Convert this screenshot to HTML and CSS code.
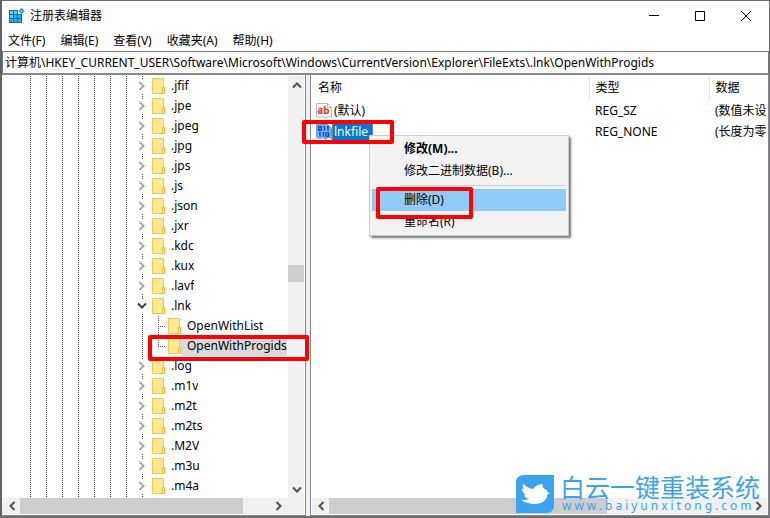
FILE: index.html
```html
<!DOCTYPE html>
<html lang="zh-CN">
<head>
<meta charset="utf-8">
<title>注册表编辑器</title>
<link rel="stylesheet" href="styles.css">
</head>
<body>
<svg class="defs" aria-hidden="true">
  <symbol id="folder" viewBox="0 0 14 16"><path d="M.5.5h11v9h1.500v6H.5z" fill="#ffe794" stroke="#eecb4d"/><path d="M10.500 15.500v-6h2v6z" fill="#ffe794" stroke="#e6c04a"/></symbol>
  <symbol id="right" viewBox="0 0 8 10"><path d="M1.500 1l4 4-4 4" fill="none" stroke="currentColor" stroke-width="2"/></symbol>
  <symbol id="down" viewBox="0 0 10 8"><path d="M1 1.500l4 4 4-4" fill="none" stroke="currentColor" stroke-width="2"/></symbol>
</svg>
<div class="window">
  <header class="titlebar">
    <svg class="app-icon" viewBox="0 0 16 16"><path d="M0 2h9v4h4v9H0z" fill="#0b6fa4"/><path d="M1 3h3v3H1zM5 3h3v3H5zM1 7h3v3H1z" fill="#5fd3fb"/><path d="M5 7h3v3H5zM9 7h3v3H9zM1 11h3v3H1zM5 11h3v3H5zM9 11h3v3H9z" fill="#27b0ec"/><path d="M12.500 0L15.500 3l-3 3-3-3z" fill="#168bc4"/><path d="M12.500 1.700L13.800 3l-1.300 1.300L11.200 3z" fill="#8be2ff"/></svg>
    <h1>注册表编辑器</h1>
    <div class="controls">
      <button aria-label="最小化"><svg viewBox="0 0 10 10"><path d="M0 4.500h10" stroke="#000"/></svg></button>
      <button aria-label="最大化"><svg viewBox="0 0 10 10"><path d="M.5.5h9v9h-9z" fill="none" stroke="#000"/></svg></button>
      <button aria-label="关闭"><svg viewBox="0 0 10 10"><path d="M0 0l10 10M10 0L0 10" stroke="#000"/></svg></button>
    </div>
  </header>
  <nav class="menubar">
    <button>文件(F)</button><button>编辑(E)</button><button>查看(V)</button><button>收藏夹(A)</button><button>帮助(H)</button>
  </nav>
  <input class="address" type="text" aria-label="路径" value="计算机\HKEY_CURRENT_USER\Software\Microsoft\Windows\CurrentVersion\Explorer\FileExts\.lnk\OpenWithProgids">
  <main class="panes">
    <section class="pane tree-pane">
      <div class="tree-area">
        <ul class="tree">
          <li><svg class="twist"><use href="#right"/></svg><svg class="folder"><use href="#folder"/></svg><span>.jfif</span></li>
          <li><svg class="twist"><use href="#right"/></svg><svg class="folder"><use href="#folder"/></svg><span>.jpe</span></li>
          <li><svg class="twist"><use href="#right"/></svg><svg class="folder"><use href="#folder"/></svg><span>.jpeg</span></li>
          <li><svg class="twist"><use href="#right"/></svg><svg class="folder"><use href="#folder"/></svg><span>.jpg</span></li>
          <li><svg class="twist"><use href="#right"/></svg><svg class="folder"><use href="#folder"/></svg><span>.jps</span></li>
          <li><svg class="twist"><use href="#right"/></svg><svg class="folder"><use href="#folder"/></svg><span>.js</span></li>
          <li><svg class="twist"><use href="#right"/></svg><svg class="folder"><use href="#folder"/></svg><span>.json</span></li>
          <li><svg class="twist"><use href="#right"/></svg><svg class="folder"><use href="#folder"/></svg><span>.jxr</span></li>
          <li><svg class="twist"><use href="#right"/></svg><svg class="folder"><use href="#folder"/></svg><span>.kdc</span></li>
          <li><svg class="twist"><use href="#right"/></svg><svg class="folder"><use href="#folder"/></svg><span>.kux</span></li>
          <li><svg class="twist"><use href="#right"/></svg><svg class="folder"><use href="#folder"/></svg><span>.lavf</span></li>
          <li><svg class="twist open"><use href="#down"/></svg><svg class="folder"><use href="#folder"/></svg><span>.lnk</span></li>
          <li class="child"><i class="branch"></i><svg class="folder"><use href="#folder"/></svg><span>OpenWithList</span></li>
          <li class="child selected"><i class="branch last"></i><svg class="folder"><use href="#folder"/></svg><span>OpenWithProgids</span><b class="mark mark-tree"></b></li>
          <li><svg class="twist"><use href="#right"/></svg><svg class="folder"><use href="#folder"/></svg><span>.log</span></li>
          <li><svg class="twist"><use href="#right"/></svg><svg class="folder"><use href="#folder"/></svg><span>.m1v</span></li>
          <li><svg class="twist"><use href="#right"/></svg><svg class="folder"><use href="#folder"/></svg><span>.m2t</span></li>
          <li><svg class="twist"><use href="#right"/></svg><svg class="folder"><use href="#folder"/></svg><span>.m2ts</span></li>
          <li><svg class="twist"><use href="#right"/></svg><svg class="folder"><use href="#folder"/></svg><span>.M2V</span></li>
          <li><svg class="twist"><use href="#right"/></svg><svg class="folder"><use href="#folder"/></svg><span>.m3u</span></li>
          <li><svg class="twist"><use href="#right"/></svg><svg class="folder"><use href="#folder"/></svg><span>.m4a</span></li>
        </ul>
        <div class="vbar">
          <button aria-label="向上滚动"><svg class="flip"><use href="#down"/></svg></button>
          <div class="vtrack"><div class="vthumb"></div></div>
          <button aria-label="向下滚动"><svg><use href="#down"/></svg></button>
        </div>
      </div>
      <div class="hbar tree-hbar">
        <button aria-label="向左滚动"><svg class="flip"><use href="#right"/></svg></button>
        <div class="htrack"><div class="hthumb"></div></div>
        <button aria-label="向右滚动"><svg><use href="#right"/></svg></button>
      </div>
    </section>
    <section class="pane list-pane">
      <div class="list-area">
        <table>
          <colgroup><col class="c-name"><col class="c-type"><col></colgroup>
          <thead><tr><th>名称</th><th>类型</th><th>数据</th></tr></thead>
          <tbody>
            <tr><td><div class="cell"><svg class="value-icon" viewBox="0 0 16 16"><path d="M.5.500h11l4 4v10l-3-1-3 1.500-3-1.500-3 1-3-1z" fill="#fff" stroke="#b9b9b9"/><path d="M11.500.5v4h4" fill="none" stroke="#b9b9b9"/><g fill="none" stroke="#d8452a" stroke-width="1.600"><path d="M2.500 5.500h3.200V11M5.700 7.800H3.500a1.200 1.200 0 0 0 0 2.400h2.200M8.700 3v8M8.700 6.200h2a1.500 1.500 0 0 1 1.500 1.500v1a1.500 1.500 0 0 1-1.500 1.500h-2"/></g></svg><span class="name">(默认)</span></div></td><td>REG_SZ</td><td>(数值未设</td></tr>
            <tr class="selected"><td><div class="cell"><svg class="value-icon" viewBox="0 0 16 16"><path d="M.5.500h11l4 4v10l-3-1-3 1.500-3-1.500-3 1-3-1z" fill="#74b4ea" stroke="#5b9fd8"/><g fill="none" stroke="#0a4fc4" stroke-width="1.400"><path d="M2.700 2.700h2.600v3.600H2.700zM7.500 2.700h1v4M11 2.700h1v4M3 8.700h1v4M6.500 8.700h1v4M10 8.900h2.600v3.300H10z"/></g></svg><span class="name">lnkfile</span></div></td><td>REG_NONE</td><td>(长度为零</td></tr>
          </tbody>
        </table>
        <b class="mark mark-value"></b>
        <div class="context" role="menu">
          <button role="menuitem" class="default">修改(M)...</button>
          <button role="menuitem">修改二进制数据(B)...</button>
          <hr>
          <button role="menuitem" class="hover">删除(D)<b class="mark mark-delete"></b></button>
          <button role="menuitem">重命名(R)</button>
        </div>
      </div>
      <div class="hbar list-hbar">
        <button aria-label="向左滚动"><svg class="flip"><use href="#right"/></svg></button>
        <div class="htrack"><div class="hthumb"></div></div>
        <button aria-label="向右滚动"><svg><use href="#right"/></svg></button>
      </div>
    </section>
  </main>
  <aside class="watermark">
    <svg viewBox="0 0 38 38"><path d="M8 0h30v30q0 8-8 8H0V8q0-8 8-8z" fill="#3ca3ee"/><path d="M5 24.500c4 1 6 .5 8-1-3 0-4.500-2-5-3.500h2.500c-3-1-4.500-4-4.500-6.500l2 .8C6 12 6.500 10.500 7.500 9c3 3 6 4.500 10 5 0-1 4-4.500 8-5l1.500.2c-1 1.300-.5 2.800 1 4.300 2 1 3 2 3.500 3.500l2.500 1.500-2.700 1c0 6-6 10-14 9.500-4-.3-9-1.500-12.300-4.500z" fill="#fff"/></svg>
    <div><strong>白云一键重装系统</strong><small>www.baiyunxitong.com</small></div>
  </aside>
</div>
</body>
</html>
```
FILE: styles.css
```css
* { box-sizing: border-box; }
body {
  margin: 0;
  font: 12px/20px "Noto Sans", "Noto Sans CJK SC", sans-serif;
  color: #000;
}
button, input { font: inherit; color: inherit; border: 0; background: none; padding: 0; }
ul { list-style: none; margin: 0; padding: 0; }
.defs { display: none; }

.window {
  position: relative;
  height: 100vh;
  display: flex;
  flex-direction: column;
  background: #f0f0f0;
  border: 1px solid #6d6d6d;
  border-left: 2px solid #626266;
  border-bottom-width: 2px;
  overflow: hidden;
}

.titlebar { display: flex; align-items: center; height: 30px; background: #fff; padding-left: 7px; flex: none; }
.app-icon { width: 16px; height: 16px; }
.titlebar h1 { margin: 0 auto 0 5px; font-size: 12px; font-weight: 400; }
.controls { display: flex; height: 100%; }
.controls button { width: 46px; display: flex; align-items: center; justify-content: center; }
.controls svg { width: 10px; height: 10px; overflow: visible; }

.menubar { display: flex; gap: 15px; background: #fff; padding: 0 6px; height: 20px; flex: none; }
.address {
  flex: none;
  width: 100%;
  height: 24px;
  background: #fff;
  border: 1px solid #7a7a7a;
  border-bottom: 2px solid #828790;
  padding: 0 2px 1px;
}

.panes { flex: 1; min-height: 0; display: flex; gap: 4px; }
.pane { display: flex; flex-direction: column; background: #fff; border: 1px solid #828790; border-top: 0; padding: 1px 1px 1px 0; }
.tree-pane { width: 304px; flex: none; border-left: 0; }
.list-pane { flex: 1; min-width: 0; padding-left: 1px; }
.tree-area { flex: 1; min-height: 0; display: flex; }

.tree {
  flex: 1;
  min-width: 0;
  background-image:
    repeating-linear-gradient(to bottom, transparent 0 1px, #fff 1px 2px),
    repeating-linear-gradient(to right, #444 0 1px, transparent 1px 16px);
  background-size: 115px 100%;
  background-position: 28px 0;
  background-repeat: no-repeat;
}
.tree li { position: relative; display: flex; align-items: center; height: 20px; padding-left: 134px; }
.tree li span { align-self: stretch; padding-left: 5px; min-width: 0; overflow: hidden; white-space: nowrap; }
.twist { width: 12px; height: 14px; padding: 2px; margin-right: 4px; background: #fff; color: #a6a6a6; flex: none; }
.twist.open { color: #404040; padding: 1px; }
.folder { width: 14px; height: 16px; flex: none; }
.tree .child { padding-left: 156px; }
.branch { width: 7px; height: 20px; margin-right: 3px; background: repeating-linear-gradient(to bottom, #666 0 1px, transparent 1px 2px) 0 0 / 1px 100% no-repeat, repeating-linear-gradient(to right, #666 0 1px, transparent 1px 2px) 0 10px / 100% 1px no-repeat; }
.branch.last { background-size: 1px 10px, 100% 1px; }
.tree .selected span { background: #d9d9d9; flex: 1; }
.tree .selected .folder { background: #d9d9d9; }

.vbar { width: 17px; background: #f0f0f0; display: flex; flex-direction: column; flex: none; border-left: 1px solid #fff; }
.vtrack { flex: 1; padding-top: 172px; }
.vthumb { height: 17px; background: #cdcdcd; }
.vbar button, .hbar button { width: 17px; height: 17px; display: flex; align-items: center; justify-content: center; color: #505050; flex: none; }
.vbar svg { width: 10px; height: 8px; }
.hbar svg { width: 8px; height: 10px; }
.vbar .flip, .hbar .flip { transform: rotate(180deg); }
.hbar { display: flex; height: 16px; align-items: center; background: #f0f0f0; flex: none; }
.tree-hbar { padding: 0 17px 0 1px; }
.htrack { flex: 1; height: 100%; }
.hthumb { height: 100%; width: 89%; background: #cdcdcd; }
.list-hbar .hthumb { width: 66%; }

.list-area { flex: 1; min-height: 0; position: relative; }
table { width: 100%; table-layout: fixed; border-collapse: collapse; }
.c-name { width: 277px; }
.c-type { width: 120px; }
th, td { text-align: left; font-weight: 400; padding: 0 0 0 6px; white-space: nowrap; }
th { height: 24px; border-right: 1px solid #e5e5e5; }
th:last-child { border: 0; }
td { height: 21px; }
td:first-child { padding-left: 4px; }
.cell { display: flex; align-items: center; }
.value-icon { width: 16px; height: 16px; }
.name { padding: 0 2px; line-height: 18px; }
.list-area .selected .name { background: #0078d7; color: #fff; padding-right: 5px; outline: 1px dotted #e08a3c; outline-offset: -1px; }

.context {
  position: absolute;
  left: 57px;
  top: 59px;
  width: 200px;
  padding: 2px;
  background: #f2f2f2;
  border: 1px solid #ccc;
  box-shadow: 2px 2px 2px #777;
}
.context button { position: relative; display: block; width: 100%; height: 22px; padding-left: 32px; text-align: left; }
.context .default { font-weight: 700; }
.context .hover { background: #91c9f7; }
.context hr { margin: 3px 0 3px 28px; border: 0; height: 1px; background: #d0d0d0; }

.mark { position: absolute; border: 4px solid #f00; border-radius: 2px; z-index: 2; }
.mark-tree { left: 146px; top: -1px; width: 161px; height: 26px; }
.mark-value { left: -10px; top: 44px; width: 92px; height: 24px; }
.mark-delete { left: 4px; top: -2px; width: 97px; height: 32px; }

.watermark { position: absolute; right: 9px; bottom: 3px; display: flex; gap: 6px; color: #3ca3ee; z-index: 3; }
.watermark svg { width: 38px; height: 38px; }
.watermark strong { display: block; font-size: 25px; font-weight: 400; line-height: 24px; }
.watermark small { display: block; font-size: 12px; line-height: 14px; letter-spacing: 3px; padding-left: 2px; }
```
